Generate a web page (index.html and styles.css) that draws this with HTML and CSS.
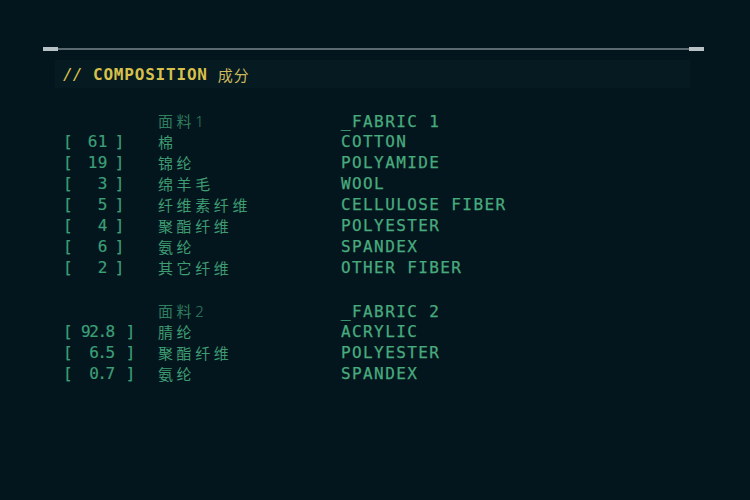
FILE: index.html
```html
<!DOCTYPE html>
<html lang="zh">
<head>
<meta charset="utf-8">
<link rel="stylesheet" href="styles.css">
</head>
<body>
<div class="frame">
  <div class="rule"><span class="cap"></span><span class="line"></span><span class="cap"></span></div>
  <div class="band">
    <span class="slashes">//</span>
    <span class="title">COMPOSITION</span>
    <span class="title-cn">成分</span>
  </div>

  <div class="section s1">
    <div class="row head"><span class="pct"></span><span class="cn">面料<span class="num-cn">1</span></span><span class="en">_FABRIC 1</span></div>
    <div class="row"><span class="pct"><i>[</i><b>61</b><i>]</i></span><span class="cn">棉</span><span class="en">COTTON</span></div>
    <div class="row"><span class="pct"><i>[</i><b>19</b><i>]</i></span><span class="cn">锦纶</span><span class="en">POLYAMIDE</span></div>
    <div class="row"><span class="pct"><i>[</i><b>3</b><i>]</i></span><span class="cn">绵羊毛</span><span class="en">WOOL</span></div>
    <div class="row"><span class="pct"><i>[</i><b>5</b><i>]</i></span><span class="cn">纤维素纤维</span><span class="en">CELLULOSE FIBER</span></div>
    <div class="row"><span class="pct"><i>[</i><b>4</b><i>]</i></span><span class="cn">聚酯纤维</span><span class="en">POLYESTER</span></div>
    <div class="row"><span class="pct"><i>[</i><b>6</b><i>]</i></span><span class="cn">氨纶</span><span class="en">SPANDEX</span></div>
    <div class="row"><span class="pct"><i>[</i><b>2</b><i>]</i></span><span class="cn">其它纤维</span><span class="en">OTHER FIBER</span></div>
  </div>

  <div class="section s2">
    <div class="row head"><span class="pct"></span><span class="cn">面料<span class="num-cn">2</span></span><span class="en">_FABRIC 2</span></div>
    <div class="row"><span class="pct"><i>[</i><b>92.8</b><i>]</i></span><span class="cn">腈纶</span><span class="en">ACRYLIC</span></div>
    <div class="row"><span class="pct"><i>[</i><b>6.5</b><i>]</i></span><span class="cn">聚酯纤维</span><span class="en">POLYESTER</span></div>
    <div class="row"><span class="pct"><i>[</i><b>0.7</b><i>]</i></span><span class="cn">氨纶</span><span class="en">SPANDEX</span></div>
  </div>
</div>
</body>
</html>
```

FILE: styles.css
```css
html, body {
  margin: 0;
  padding: 0;
  background: #04161d;
  width: 750px;
  height: 500px;
  overflow: hidden;
}

.frame {
  width: 661px;
  margin-left: 43px;
  padding-top: 47px;
  font-family: "DejaVu Sans Mono", "Liberation Mono", monospace;
}

.rule {
  display: flex;
  align-items: center;
  height: 4px;
}
.cap {
  width: 15px;
  height: 4px;
  background: #b8c1c4;
}
.line {
  flex: 1;
  height: 2px;
  background: #5a6a70;
}

.band {
  margin: 9px 14px 0 12px;
  height: 28px;
  background: #051a21;
  display: flex;
  align-items: center;
  padding-left: 8px;
  color: #d8c04c;
}
.slashes {
  font-size: 16px;
  font-style: italic;
  letter-spacing: 0;
  width: 30px;
}
.title {
  font-size: 16px;
  font-weight: bold;
  letter-spacing: 0.8px;
}
.title-cn {
  font-family: "Noto Sans CJK SC", sans-serif;
  font-size: 15px;
  letter-spacing: 1px;
  margin-left: 10px;
  color: #cdb95e;
}

.section {
  margin-top: 22px;
}

.row {
  display: grid;
  grid-template-columns: 115px 183px auto;
  height: 21px;
  line-height: 21px;
  align-items: center;
}
.pct {
  display: flex;
  padding-left: 20px;
  color: #3c9f77;
  font-size: 16px;
  -webkit-text-stroke: 0.2px #3c9f77;
}
.pct i {
  font-style: normal;
}
.pct b {
  font-weight: normal;
  text-align: right;
  width: 35px;
  letter-spacing: 0.3px;
}
.pct b + i {
  margin-left: 7px;
}
.s2 .pct b {
  width: 41px;
  letter-spacing: -1.5px;
}
.s2 .pct b + i {
  margin-left: 12px;
}

.cn {
  font-family: "Noto Sans CJK SC", sans-serif;
  font-size: 15px;
  letter-spacing: 3.6px;
  color: #3e9c73;
}
.num-cn {
  font-family: "Noto Sans", sans-serif;
  font-weight: 300;
  letter-spacing: 0;
}
.en {
  font-size: 16px;
  letter-spacing: 1.4px;
  color: #48ab7e;
  -webkit-text-stroke: 0.25px #48ab7e;
}
.head .cn {
  color: #2e7f60;
}
```
